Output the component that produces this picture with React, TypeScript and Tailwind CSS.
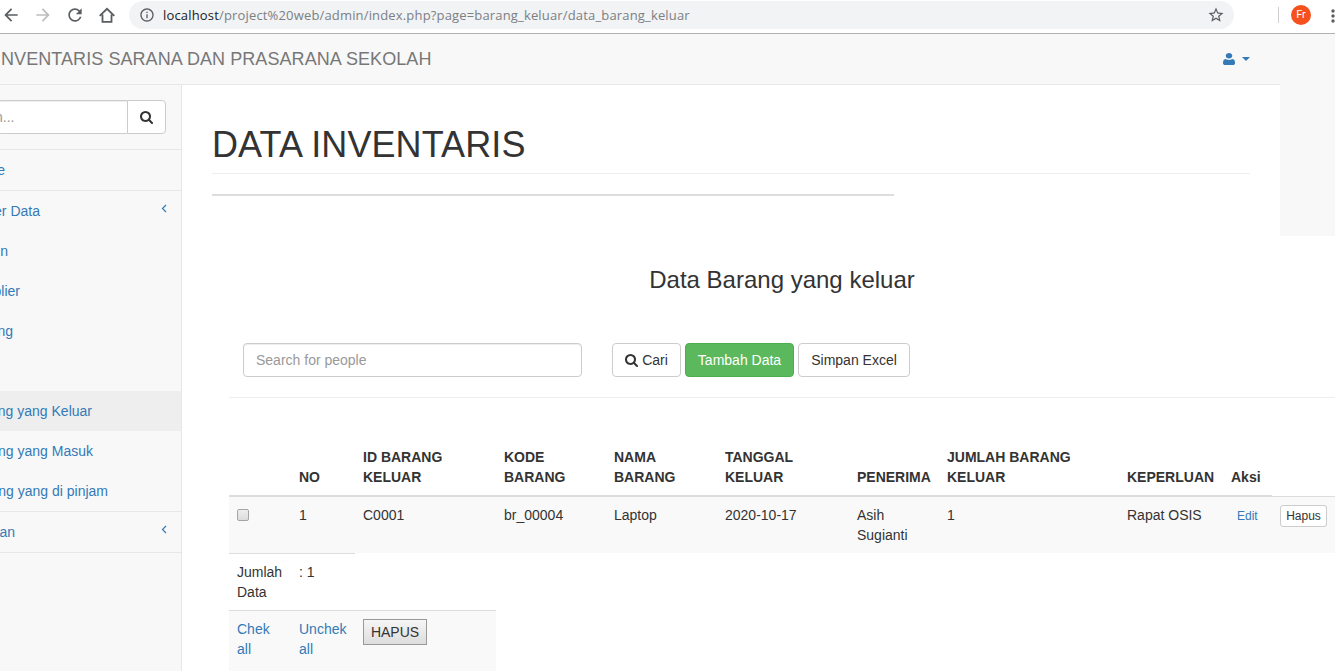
import { MdArrowBack, MdArrowForward, MdInfoOutline, MdRefresh, MdStarBorder } from "react-icons/md";

function SearchIcon() {
  return (
    <svg viewBox="0 0 1664 1664" className="h-[13px] w-[13px] shrink-0" fill="currentColor">
      <path d="M1152 704q0-185-131.5-316.5T704 256 387.5 387.5 256 704t131.5 316.5T704 1152t316.5-131.5T1152 704zm512 832q0 52-38 90t-90 38q-54 0-90-38l-343-342q-179 124-399 124-143 0-273.5-55.5t-225-150T55.5 977.5 0 704t55.5-273.5 150-225 225-150T704 0t273.5 55.5 225 150 150 225T1408 704q0 220-124 399l343 343q37 37 37 90z" />
    </svg>
  );
}

function UserIcon() {
  return (
    <svg viewBox="0 0 1408 1664" className="h-[12px] w-[12px]" preserveAspectRatio="none" fill="currentColor">
      <path d="M1408 1405q0 120-73 189.5t-194 69.5H267q-121 0-194-69.5T0 1405q0-53 3.5-103.5t14-109T44 1084t43-97.5 62-81 85.5-53.5T346 832q9 0 42 21.5t74.5 48 108 48T704 971t133.5-21.5 108-48 74.5-48 42-21.5q61 0 111.5 20t85.5 53.5 62 81 43 97.5 26.5 108.5 14 109 3.5 103.5zM1088 384q0 159-112.5 271.5T704 768 432.5 655.5 320 384t112.5-271.5T704 0t271.5 112.5T1088 384z" />
    </svg>
  );
}

function BrowserBar() {
  return (
    <div className="flex h-[34px] shrink-0 items-start border-b border-[#b1b1b3] bg-white text-[#5a5d61]">
      <MdArrowBack className="mt-[5px] ml-px h-5 w-5 shrink-0" />
      <MdArrowForward className="mt-[5px] ml-3 h-5 w-5 shrink-0 text-[#bcbdbf]" />
      <MdRefresh className="mt-[5px] ml-3 h-5 w-5 shrink-0" />
      <svg viewBox="0 0 18 18" className="mt-[6px] ml-[13px] h-[18px] w-[18px] shrink-0" fill="none" stroke="currentColor" strokeWidth="1.8">
        <path d="M1.7 9.9 9 2.8l7.3 7.1M4.5 8.5v7.4h9V8.5" />
      </svg>
      <div className="mt-px ml-[13px] flex h-[28px] w-[1105px] shrink-0 items-center rounded-full bg-[#f1f3f4] pl-[10px]">
        <MdInfoOutline className="h-4 w-4 shrink-0" />
        <div className="ml-[8px] w-[540px] font-['Open_Sans',sans-serif] text-[13px] leading-[18px] tracking-[0.165px] whitespace-nowrap text-[#7c8085]">
          <span className="text-[#202124]">localhost</span>/project%20web/admin/index.php?page=barang_keluar/data_barang_keluar
        </div>
        <MdStarBorder className="ml-[504px] h-[18px] w-[18px] shrink-0" />
      </div>
      <div className="mt-[7px] ml-[44px] h-4 w-px shrink-0 bg-[#cdced0]" />
      <div className="mt-[5px] ml-[12px] flex h-5 w-5 shrink-0 items-center justify-center rounded-full bg-[#f4511e] font-['Roboto',sans-serif] text-[11px] text-white">
        Fr
      </div>
      <svg viewBox="0 0 4 14" className="mt-[9px] ml-[20px] h-[14px] w-1 shrink-0" fill="currentColor">
        <circle cx="2" cy="2" r="1.7" />
        <circle cx="2" cy="7" r="1.7" />
        <circle cx="2" cy="12" r="1.7" />
      </svg>
    </div>
  );
}

type ItemProps = { label: string; width: string; arrow?: boolean; active?: boolean; line?: boolean };

function SideItem({ label, width, arrow, active, line }: ItemProps) {
  return (
    <div
      className={`flex shrink-0 justify-between text-[#337ab7] ${active ? "bg-[#eeeeee]" : ""} ${line ? "h-[41px] border-b border-[#e7e7e7]" : "h-10"}`}
    >
      <div className={`flex justify-end pt-[10px] whitespace-nowrap ${width}`}>{label}</div>
      {arrow && (
        <svg viewBox="0 0 6 9" className="mt-[13px] mr-[14px] h-[9px] w-[6px]" fill="none" stroke="currentColor" strokeWidth="1.2">
          <path d="M5 1 1.5 4.5 5 8" />
        </svg>
      )}
    </div>
  );
}

function Sidebar() {
  return (
    <aside className="flex w-[182px] shrink-0 flex-col overflow-hidden border-r border-[#e7e7e7] bg-[#f8f8f8]">
      <div className="flex h-[65px] shrink-0 border-b border-[#e7e7e7] pt-[15px]">
        <div className="flex h-[34px] w-[127px] justify-start border-y border-[#ccc] bg-white pt-[6px] text-[#999] shadow-[inset_0_1px_1px_rgba(0,0,0,0.075)]">
          <span className="-ml-[5px]">h...</span>
        </div>
        <div className="flex h-[34px] w-[39px] items-center justify-center rounded-r-[4px] border border-[#ccc] bg-white">
          <SearchIcon />
        </div>
      </div>
      <SideItem label="e" width="w-[5px]" line />
      <div className="flex h-10 shrink-0 justify-between text-[#337ab7]">
        <div className="flex w-[40px] justify-end pt-[10px] whitespace-nowrap">er Data</div>
        <svg viewBox="0 0 6 9" className="mt-[13px] mr-[14px] h-[9px] w-[6px]" fill="none" stroke="currentColor" strokeWidth="1.2">
          <path d="M5 1 1.5 4.5 5 8" />
        </svg>
      </div>
      <SideItem label="n" width="w-[8px]" />
      <SideItem label="plier" width="w-[20px]" />
      <SideItem label="ng" width="w-[13px]" />
      <div className="h-10 shrink-0" />
      <SideItem label="ng yang Keluar" width="w-[92px]" active />
      <SideItem label="ng yang Masuk" width="w-[93px]" />
      <SideItem label="ng yang di pinjam" width="w-[108px]" line />
      <SideItem label="ran" width="w-[15px]" arrow line />
    </aside>
  );
}

const columns = "grid grid-cols-[62px_64px_141px_110px_111px_132px_90px_180px_104px_49px_63px]";

function Th({ children }: { children?: React.ReactNode }) {
  return <div className="flex items-end border-b-2 border-[#ddd] px-2 pb-2 font-bold whitespace-nowrap">{children}</div>;
}

function DataTable() {
  return (
    <div className="ml-[47px]">
      <div className={`h-[58px] ${columns}`}>
        <Th />
        <Th>NO</Th>
        <Th><span>ID BARANG<br />KELUAR</span></Th>
        <Th><span>KODE<br />BARANG</span></Th>
        <Th><span>NAMA<br />BARANG</span></Th>
        <Th><span>TANGGAL<br />KELUAR</span></Th>
        <Th>PENERIMA</Th>
        <Th><span>JUMLAH BARANG<br />KELUAR</span></Th>
        <Th>KEPERLUAN</Th>
        <Th>Aksi</Th>
        <div className="border-b border-[#ddd]" />
      </div>
      <div className={`h-[56px] bg-[#f9f9f9] [&>div]:px-2 [&>div]:pt-2 ${columns}`}>
        <div>
          <div className="mt-1 h-3 w-3 rounded-[2px] border border-[#a5a5a5] bg-linear-to-b from-[#eeeeee] to-[#dcdcdc]" />
        </div>
        <div>1</div>
        <div>C0001</div>
        <div>br_00004</div>
        <div>Laptop</div>
        <div>2020-10-17</div>
        <div>Asih<br />Sugianti</div>
        <div>1</div>
        <div>Rapat OSIS</div>
        <div><span className="ml-[6px] text-[12px] text-[#337ab7]">Edit</span></div>
        <div>
          <div className="flex h-[22px] w-[47px] items-center justify-center rounded-[3px] border border-[#ccc] bg-white text-[12px] leading-[18px]">Hapus</div>
        </div>
      </div>
      <div className="flex h-[57px] w-[126px] border-t border-[#ddd] pt-2">
        <div className="w-[62px] pl-2">Jumlah<br />Data</div>
        <div className="pl-2">: 1</div>
      </div>
      <div className="flex h-[70px] w-[267px] border-t border-[#ddd] bg-[#f9f9f9] pt-2">
        <div className="w-[62px] pl-2 text-[#337ab7]">Chek<br />all</div>
        <div className="w-[64px] pl-2 text-[#337ab7]">Unchek<br />all</div>
        <div className="ml-2 flex h-[26px] w-[64px] items-center justify-center border border-[#999] bg-linear-to-b from-[#f6f6f6] to-[#dddddd]">HAPUS</div>
      </div>
    </div>
  );
}

const button = "flex h-[34px] shrink-0 items-center justify-center rounded-[4px] border whitespace-nowrap";

export default function App() {
  return (
    <div className="flex h-[671px] w-[1335px] flex-col overflow-hidden bg-white font-['Liberation_Sans',Arial,sans-serif] text-[14px] leading-5 text-[#333]">
      <BrowserBar />
      <div className="flex h-[51px] shrink-0 bg-[#f8f8f8]">
        <div className="flex w-[1280px] items-center border-b border-[#e7e7e7] text-[18px] text-[#777]">
          <span className="w-[1222px] pl-px tracking-[0.07px] whitespace-nowrap">NVENTARIS SARANA DAN PRASARANA SEKOLAH</span>
          <div className="ml-px flex items-center gap-[7px] text-[#337ab7]">
            <UserIcon />
            <svg viewBox="0 0 8 4" className="h-1 w-2" fill="currentColor"><path d="M0 0h8L4 4z" /></svg>
          </div>
        </div>
      </div>
      <div className="flex min-h-0 flex-1">
        <Sidebar />
        <main className="flex w-[1153px] shrink-0 flex-col">
          <div className="flex h-[151px] shrink-0">
            <div className="w-[1098px] px-[30px] pt-10">
              <h1 className="h-[49px] border-b border-[#eee] text-[36px] leading-[40px] tracking-[0.1px]">DATA INVENTARIS</h1>
              <div className="mt-5 h-[2px] w-[682px] bg-[#ddd]" />
            </div>
            <div className="flex-1 bg-[#f8f8f8]" />
          </div>
          <h3 className="mt-[31px] ml-[47px] w-[1106px] text-center text-[24px] leading-[26px]">Data Barang yang keluar</h3>
          <div className="mt-[50px] ml-[47px] flex h-[55px] shrink-0 border-b border-[#eee] pl-[14px]">
            <div className="mr-[30px] h-[34px] w-[339px] rounded-[4px] border border-[#ccc] px-3 py-[6px] text-[#999] shadow-[inset_0_1px_1px_rgba(0,0,0,0.075)]">
              Search for people
            </div>
            <div className="flex gap-1">
              <div className={`${button} w-[69px] gap-1 border-[#ccc] bg-white`}><SearchIcon />Cari</div>
              <div className={`${button} w-[109px] border-[#4cae4c] bg-[#5cb85c] text-white`}>Tambah Data</div>
              <div className={`${button} w-[112px] border-[#ccc] bg-white`}>Simpan Excel</div>
            </div>
          </div>
          <div className="h-[41px] shrink-0" />
          <DataTable />
        </main>
      </div>
    </div>
  );
}
